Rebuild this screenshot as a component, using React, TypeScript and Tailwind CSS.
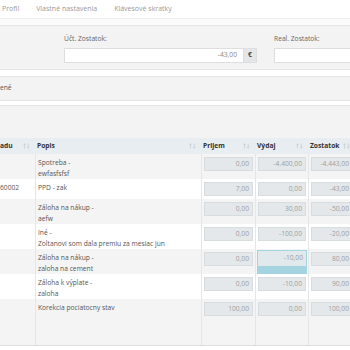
import React from "react";

type Row = {
  id?: string;
  popis: string[];
  prijem: string;
  vydaj: string;
  zostatok: string;
  focus?: boolean;
};

const rows: Row[] = [
  { popis: ["Spotreba -", "ewfasfsfsf"], prijem: "0,00", vydaj: "-4.400,00", zostatok: "-4.443,00" },
  { id: "60002", popis: ["PPD - zak"], prijem: "7,00", vydaj: "0,00", zostatok: "-43,00" },
  { popis: ["Záloha na nákup -", "aefw"], prijem: "0,00", vydaj: "30,00", zostatok: "-50,00" },
  { popis: ["Iné -", "Zoltanovi som dala premiu za mesiac jun"], prijem: "0,00", vydaj: "-100,00", zostatok: "-20,00" },
  { popis: ["Záloha na nákup -", "zaloha na cement"], prijem: "0,00", vydaj: "-10,00", zostatok: "80,00", focus: true },
  { popis: ["Záloha k výplate -", "zaloha"], prijem: "0,00", vydaj: "-10,00", zostatok: "90,00" },
  { popis: ["Korekcia pociatocny stav"], prijem: "100,00", vydaj: "0,00", zostatok: "100,00" },
];

const cols = "grid grid-cols-[35px_166px_54px_53px_47px]";

const SortIcon = () => (
  <svg width="7" height="6" viewBox="0 0 7 6" className="shrink-0">
    <path d="M1.5 5.5V0.8M0.4 1.9L1.5 0.8L2.6 1.9" stroke="#c3c8cc" strokeWidth="0.7" fill="none" />
    <path d="M5.2 0.5V5.2M4.1 4.1L5.2 5.2L6.3 4.1" stroke="#c3c8cc" strokeWidth="0.7" fill="none" />
  </svg>
);

const HeadCell = ({ label, first }: { label: string; first?: boolean }) => (
  <div className={`flex items-center justify-between pr-[5px] ${first ? "pl-0" : "pl-[2px]"}`}>
    <span className="font-bold text-[#333]">{label}</span>
    <SortIcon />
  </div>
);

const Amount = ({ value, focus }: { value: string; focus?: boolean }) =>
  focus ? (
    <div className="h-[24px] -mt-[2px] mx-[1px] border border-[#a5d4e1] border-b-[8px] bg-[#e2e9ec] flex items-start justify-end pr-[3px] pt-[2px] text-[#9a9a9a] whitespace-nowrap">
      {value}
    </div>
  ) : (
    <div className="h-[14px] mx-[2px] border border-[#d7dcdf] bg-[#e4e8eb] flex items-center justify-end pr-[3px] text-[#a0a0a0] whitespace-nowrap">
      {value}
    </div>
  );

export default function App() {
  return (
    <div
      className="w-[350px] h-[350px] overflow-hidden bg-white text-[6.7px] text-[#555]"
      style={{ fontFamily: '"Open Sans", "Liberation Sans", sans-serif' }}
    >
      {/* tabs */}
      <div className="h-[19px] flex items-center gap-[17px] pl-[2px] text-[#999] text-[7px] border-b border-[#eeeeee]">
        <span>Profil</span>
        <span>Vlastné nastavenia</span>
        <span>Klávesové skratky</span>
      </div>
      <div className="h-[7px] bg-[#fbfbfb] border-b border-[#e6e6e6]" />

      {/* balances */}
      <div className="h-[43px] bg-[#f3f3f3] flex gap-[17px] pl-[64px] pt-[8px]">
        <div className="flex flex-col">
          <span className="text-[#666] leading-[10px]">Účt. Zostatok:</span>
          <div className="mt-[4px] flex h-[15px]">
            <div className="w-[180px] bg-white border border-[#dedede] flex items-center justify-end pr-[6px] text-[#888]">
              -43,00
            </div>
            <div className="w-[13px] bg-[#e5e6e7] border border-l-0 border-[#dedede] flex items-center justify-center font-bold text-[#444]">
              €
            </div>
          </div>
        </div>
        <div className="flex flex-col">
          <span className="text-[#666] leading-[10px]">Real. Zostatok:</span>
          <div className="mt-[4px] h-[15px] w-[90px] bg-white border border-[#dedede]" />
        </div>
      </div>
      <div className="h-[8px] bg-white border-t border-b border-[#e4e4e4]" />

      <div className="h-[23px] bg-[#f3f3f3] flex items-center text-[#555]">ené</div>
      <div className="h-[6px] bg-white border-t border-b border-[#e4e4e4]" />

      {/* table */}
      <div className="bg-[#f3f3f3] border-b border-[#dcdcdc]">
        <div className="h-[32px]" />
        <div className={`${cols} h-[16px] bg-[#e8edf1] items-center`}>
          <HeadCell label="adu" first />
          <HeadCell label="Popis" />
          <HeadCell label="Prijem" />
          <HeadCell label="Výdaj" />
          <HeadCell label="Zostatok" />
        </div>
        {rows.map((r, i) => (
          <div
            key={i}
            className={`${cols} ${i % 2 === 0 ? "bg-[#f4f4f4]" : "bg-white"} ${
              i === rows.length - 1 ? "min-h-[46px]" : r.popis.length > 1 ? "min-h-[25px]" : "min-h-[20px]"
            }`}
          >
            <div className="pt-[3px] leading-[11px] text-[#555]">{r.id}</div>
            <div className="border-l border-[#e6e6e6] pl-[2px] pt-[3px] leading-[11px] text-[#555]">
              {r.popis.map((l, j) => (
                <div key={j}>{l}</div>
              ))}
            </div>
            <div className="border-l border-[#e6e6e6] pt-[3px]">
              <Amount value={r.prijem} />
            </div>
            <div className="border-l border-[#e6e6e6] pt-[3px]">
              <Amount value={r.vydaj} focus={r.focus} />
            </div>
            <div className="border-l border-[#e6e6e6] pt-[3px]">
              <Amount value={r.zostatok} />
            </div>
          </div>
        ))}
      </div>
    </div>
  );
}
